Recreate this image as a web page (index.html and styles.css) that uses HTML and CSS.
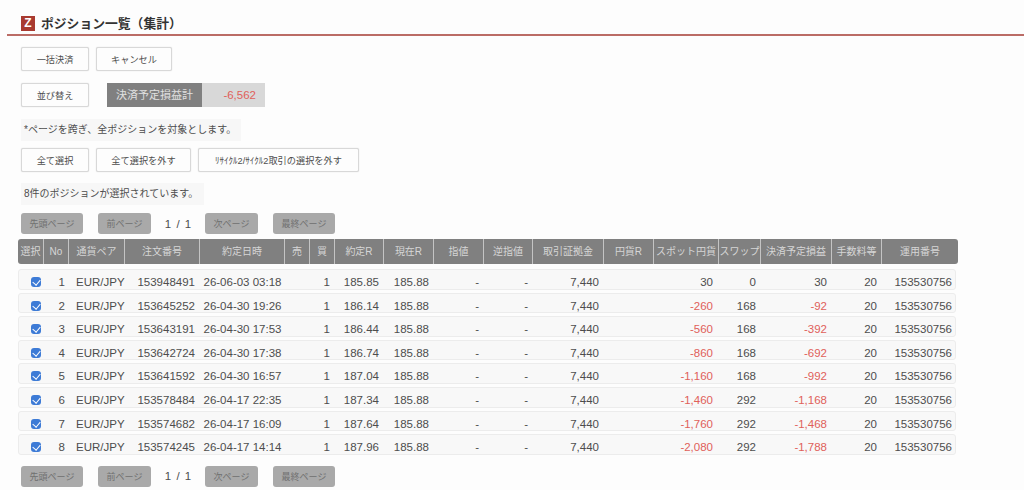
FILE: index.html
```html
<!doctype html>
<html lang="ja">
<head>
<meta charset="utf-8">
<title>ポジション一覧（集計）</title>
<link rel="stylesheet" href="styles.css">
</head>

<body>
    <div class="title-bar">
        <span class="logo">Z</span>
        <h1>ポジション一覧（集計）</h1>
    </div>

    <div class="btn-row first">
        <button class="btn w68">一括決済</button>
        <button class="btn w76">キャンセル</button>
    </div>

    <div class="btn-row second">
        <button class="btn w68">並び替え</button>
        <div class="total">
            <span class="total-label">決済予定損益計</span>
            <span class="total-value">-6,562</span>
        </div>
    </div>

    <p class="note note-wide">*ページを跨ぎ、全ポジションを対象とします。</p>

    <div class="btn-row third">
        <button class="btn w68">全て選択</button>
        <button class="btn w95">全て選択を外す</button>
        <button class="btn w161"><span class="half">ﾘｻｲｸﾙ</span>2/<span class="half">ｻｲｸﾙ</span>2取引の選択を外す</button>
    </div>

    <p class="note note-count">8件のポジションが選択されています。</p>

    <div class="pager">
        <button class="page-btn w62">先頭ページ</button>
        <button class="page-btn w53">前ページ</button>
        <span class="page-no">1 / 1</span>
        <button class="page-btn w53">次ページ</button>
        <button class="page-btn w62">最終ページ</button>
    </div>

    <div class="table">
        <div class="row head">
            <div>選択</div><div>No</div><div>通貨ペア</div><div>注文番号</div><div>約定日時</div><div>売</div><div>買</div><div>約定R</div><div>現在R</div><div>指値</div><div>逆指値</div><div>取引証拠金</div><div>円貨R</div><div>スポット円貨</div><div>スワップ</div><div>決済予定損益</div><div>手数料等</div><div>運用番号</div>
        </div>
        <div class="row">
            <div class="c"><input type="checkbox" checked></div><div>1</div><div class="l">EUR/JPY</div><div>153948491</div><div class="c">26-06-03 03:18</div><div></div><div>1</div><div>185.85</div><div>185.88</div><div>-</div><div>-</div><div>7,440</div><div></div><div>30</div><div>0</div><div>30</div><div>20</div><div>153530756</div>
        </div>
        <div class="row">
            <div class="c"><input type="checkbox" checked></div><div>2</div><div class="l">EUR/JPY</div><div>153645252</div><div class="c">26-04-30 19:26</div><div></div><div>1</div><div>186.14</div><div>185.88</div><div>-</div><div>-</div><div>7,440</div><div></div><div class="red">-260</div><div>168</div><div class="red">-92</div><div>20</div><div>153530756</div>
        </div>
        <div class="row">
            <div class="c"><input type="checkbox" checked></div><div>3</div><div class="l">EUR/JPY</div><div>153643191</div><div class="c">26-04-30 17:53</div><div></div><div>1</div><div>186.44</div><div>185.88</div><div>-</div><div>-</div><div>7,440</div><div></div><div class="red">-560</div><div>168</div><div class="red">-392</div><div>20</div><div>153530756</div>
        </div>
        <div class="row">
            <div class="c"><input type="checkbox" checked></div><div>4</div><div class="l">EUR/JPY</div><div>153642724</div><div class="c">26-04-30 17:38</div><div></div><div>1</div><div>186.74</div><div>185.88</div><div>-</div><div>-</div><div>7,440</div><div></div><div class="red">-860</div><div>168</div><div class="red">-692</div><div>20</div><div>153530756</div>
        </div>
        <div class="row">
            <div class="c"><input type="checkbox" checked></div><div>5</div><div class="l">EUR/JPY</div><div>153641592</div><div class="c">26-04-30 16:57</div><div></div><div>1</div><div>187.04</div><div>185.88</div><div>-</div><div>-</div><div>7,440</div><div></div><div class="red">-1,160</div><div>168</div><div class="red">-992</div><div>20</div><div>153530756</div>
        </div>
        <div class="row">
            <div class="c"><input type="checkbox" checked></div><div>6</div><div class="l">EUR/JPY</div><div>153578484</div><div class="c">26-04-17 22:35</div><div></div><div>1</div><div>187.34</div><div>185.88</div><div>-</div><div>-</div><div>7,440</div><div></div><div class="red">-1,460</div><div>292</div><div class="red">-1,168</div><div>20</div><div>153530756</div>
        </div>
        <div class="row">
            <div class="c"><input type="checkbox" checked></div><div>7</div><div class="l">EUR/JPY</div><div>153574682</div><div class="c">26-04-17 16:09</div><div></div><div>1</div><div>187.64</div><div>185.88</div><div>-</div><div>-</div><div>7,440</div><div></div><div class="red">-1,760</div><div>292</div><div class="red">-1,468</div><div>20</div><div>153530756</div>
        </div>
        <div class="row">
            <div class="c"><input type="checkbox" checked></div><div>8</div><div class="l">EUR/JPY</div><div>153574245</div><div class="c">26-04-17 14:14</div><div></div><div>1</div><div>187.96</div><div>185.88</div><div>-</div><div>-</div><div>7,440</div><div></div><div class="red">-2,080</div><div>292</div><div class="red">-1,788</div><div>20</div><div>153530756</div>
        </div>
    </div>

    <div class="pager bottom">
        <button class="page-btn w62">先頭ページ</button>
        <button class="page-btn w53">前ページ</button>
        <span class="page-no">1 / 1</span>
        <button class="page-btn w53">次ページ</button>
        <button class="page-btn w62">最終ページ</button>
    </div>
</body>
</html>
```

FILE: styles.css
```css
*{
    padding: 0px;
    margin: 0px;
    box-sizing: border-box;
}
html,body{
    height: 490px;
    overflow: hidden;
}
body{
    background-color: #fdfdfd;
    color: #4d4d4d;
    font-family: "Liberation Sans", "Noto Sans CJK JP", sans-serif;
    font-size: 11.5px;
}
.title-bar{
    display: flex;
    align-items: flex-start;
    gap: 6px;
    height: 21px;
    margin: 15px 0px 0px 7px;
    padding-left: 14px;
    border-bottom: 2px solid #bb6c66;
}
.logo{
    width: 14px;
    height: 15px;
    margin-top: 1px;
    background-color: #a93a30;
    color: white;
    font-size: 12px;
    font-weight: bold;
    line-height: 15px;
    text-align: center;
}
.title-bar h1{
    font-size: 12.8px;
    line-height: 18px;
    color: #333;
}
.btn-row{
    display: flex;
    align-items: center;
    gap: 7px;
    margin-left: 21px;
}
.btn-row.first{
    margin-top: 11px;
}
.btn-row.second{
    margin-top: 12px;
}
.btn-row.third{
    margin-top: 7px;
}
.btn{
    height: 24px;
    background-color: #fdfdfd;
    border: 1px solid #d8d8d8;
    border-radius: 2px;
    box-shadow: 0px 0px 1px 0px #ccc;
    color: #4d4d4d;
    font-family: inherit;
    font-size: 9.2px;
}
.half{
    font-size: 9px;
}
.w68{
    width: 68px;
}
.w76{
    width: 76px;
}
.w95{
    width: 95px;
}
.w161{
    width: 161px;
}
.total{
    display: flex;
    width: 158px;
    height: 24px;
    margin-left: 11px;
    background-color: #d8d8d8;
    line-height: 24px;
}
.total-label{
    width: 95px;
    background-color: #808080;
    color: #e0e0e0;
    font-size: 11px;
    text-align: center;
}
.total-value{
    flex: 1;
    padding-right: 9px;
    color: #e0605a;
    text-align: right;
}
.note{
    width: fit-content;
    margin-left: 21px;
    padding: 0px 3px;
    background-color: #f7f7f7;
    font-size: 10px;
    line-height: 22px;
}
.note-wide{
    margin-top: 12px;
    padding-right: 5px;
}
.note-count{
    margin-top: 11px;
    padding-right: 6px;
}
.pager{
    display: flex;
    align-items: center;
    margin: 8px 0px 0px 21px;
    height: 21px;
}
.pager.bottom{
    margin-top: 11px;
}
.page-btn{
    height: 21px;
    background-color: #a9a9a9;
    border: none;
    border-radius: 3px;
    color: #707070;
    font-family: inherit;
    font-size: 9px;
}
.w62{
    width: 62px;
}
.w53{
    width: 53px;
}
.page-btn.w62:first-child{
    margin-right: 15px;
}
.page-btn.w53 + .page-btn.w62{
    margin-left: 15px;
}
.page-no{
    width: 54px;
    text-align: center;
    word-spacing: 2px;
}
.table{
    margin: 5px 0px 0px 18px;
    width: 940px;
}
.row{
    display: grid;
    grid-template-columns: 25px 25px 56px 75px 85px 25px 25px 49px 50px 50px 49px 71px 50px 65px 42px 71px 50px 77px;
    width: 938px;
    height: 20.6px;
    margin-bottom: 3px;
    background-color: #f8f8f8;
    border: 1px solid #ececec;
    border-radius: 3px;
    line-height: 24px;
}
.row > div{
    padding-right: 5px;
    text-align: right;
    white-space: nowrap;
}
.row > div:nth-child(2){
    padding-right: 4px;
}
.row > div:nth-child(14){
    padding-right: 6px;
}
.row > div:last-child{
    padding-right: 7px;
}
.row > .l{
    padding-left: 7px;
    padding-right: 0px;
    text-align: left;
}
.row > .c{
    padding-right: 0px;
    text-align: center;
}
.row input{
    appearance: none;
    position: relative;
    display: inline-block;
    width: 10px;
    height: 10px;
    margin-left: 8px;
    vertical-align: -1px;
    background-color: #3d7bd6;
    border-radius: 3px;
}
.row input::after{
    content: "";
    position: absolute;
    left: 3px;
    top: 1px;
    width: 4px;
    height: 6px;
    border: solid white;
    border-width: 0px 1.5px 1.5px 0px;
    transform: rotate(40deg);
}
.row .red{
    color: #e0605a;
}
.row.head{
    width: 940px;
    height: 25px;
    margin-bottom: 5px;
    background-color: #808080;
    border: none;
    color: #d6d6d6;
    font-size: 10px;
    line-height: 25px;
}
.row.head > div{
    padding: 0px;
    text-align: center;
    border-left: 1px solid #c4c4c4;
}
.row.head > div:first-child{
    border-left: none;
}
```
